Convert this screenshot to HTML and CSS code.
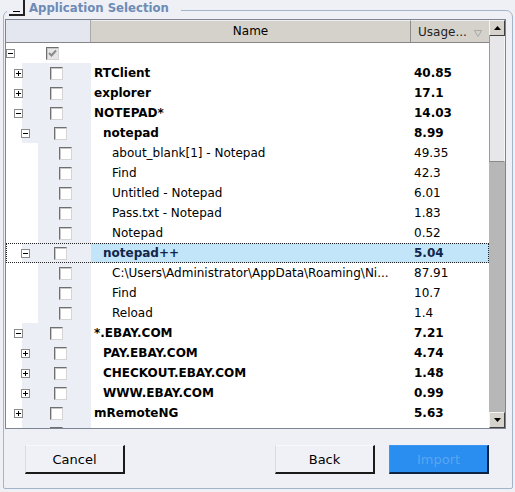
FILE: index.html
```html
<!DOCTYPE html>
<html>
<head>
<meta charset="utf-8">
<link rel="stylesheet" href="styles.css">
</head>
<body>
<div class="frame">
  <div class="legend">
    <span class="collapse"><span class="minus"></span></span>
    <span class="title">Application Selection</span>
  </div>
  <div class="grid">
    <div class="main">
      <div class="header">
        <div class="h-tree"></div>
        <div class="h-name">Name</div>
        <div class="h-usage"><span>Usage...</span>
          <svg class="sort" width="8" height="7" viewBox="0 0 8 7"><path d="M0.5 0.5 H7.5 L4 6.5 Z" fill="none" stroke="#a8a8a8" stroke-width="1"/></svg>
        </div>
      </div>
      <div class="body">
        <div class="row l0">
          <div class="tree"><span class="exp"></span><span class="cb checked"><svg width="11" height="11" viewBox="0 0 11 11"><path d="M2 5 L4.5 7.5 L9 2.5" fill="none" stroke="#8a8a8a" stroke-width="2"/></svg></span></div>
          <div class="name"></div>
          <div class="usage"></div>
        </div>
        <div class="row l1">
          <div class="tree"><span class="exp plus"></span><span class="cb"></span></div>
          <div class="name b">RTClient</div>
          <div class="usage b">40.85</div>
        </div>
        <div class="row l1">
          <div class="tree"><span class="exp plus"></span><span class="cb"></span></div>
          <div class="name b">explorer</div>
          <div class="usage b">17.1</div>
        </div>
        <div class="row l1">
          <div class="tree"><span class="exp"></span><span class="cb"></span></div>
          <div class="name b">NOTEPAD*</div>
          <div class="usage b">14.03</div>
        </div>
        <div class="row l2">
          <div class="tree"><span class="exp"></span><span class="cb"></span></div>
          <div class="name b">notepad</div>
          <div class="usage b">8.99</div>
        </div>
        <div class="row l3">
          <div class="tree"><span class="exp none"></span><span class="cb"></span></div>
          <div class="name">about_blank[1] - Notepad</div>
          <div class="usage">49.35</div>
        </div>
        <div class="row l3">
          <div class="tree"><span class="exp none"></span><span class="cb"></span></div>
          <div class="name">Find</div>
          <div class="usage">42.3</div>
        </div>
        <div class="row l3">
          <div class="tree"><span class="exp none"></span><span class="cb"></span></div>
          <div class="name">Untitled - Notepad</div>
          <div class="usage">6.01</div>
        </div>
        <div class="row l3">
          <div class="tree"><span class="exp none"></span><span class="cb"></span></div>
          <div class="name">Pass.txt - Notepad</div>
          <div class="usage">1.83</div>
        </div>
        <div class="row l3">
          <div class="tree"><span class="exp none"></span><span class="cb"></span></div>
          <div class="name">Notepad</div>
          <div class="usage">0.52</div>
        </div>
        <div class="row l2 sel">
          <div class="tree"><span class="exp"></span><span class="cb"></span></div>
          <div class="name b">notepad++</div>
          <div class="usage b">5.04</div>
        </div>
        <div class="row l3">
          <div class="tree"><span class="exp none"></span><span class="cb"></span></div>
          <div class="name">C:\Users\Administrator\AppData\Roaming\Ni...</div>
          <div class="usage">87.91</div>
        </div>
        <div class="row l3">
          <div class="tree"><span class="exp none"></span><span class="cb"></span></div>
          <div class="name">Find</div>
          <div class="usage">10.7</div>
        </div>
        <div class="row l3">
          <div class="tree"><span class="exp none"></span><span class="cb"></span></div>
          <div class="name">Reload</div>
          <div class="usage">1.4</div>
        </div>
        <div class="row l1">
          <div class="tree"><span class="exp"></span><span class="cb"></span></div>
          <div class="name b">*.EBAY.COM</div>
          <div class="usage b">7.21</div>
        </div>
        <div class="row l2">
          <div class="tree"><span class="exp plus"></span><span class="cb"></span></div>
          <div class="name b">PAY.EBAY.COM</div>
          <div class="usage b">4.74</div>
        </div>
        <div class="row l2">
          <div class="tree"><span class="exp plus"></span><span class="cb"></span></div>
          <div class="name b">CHECKOUT.EBAY.COM</div>
          <div class="usage b">1.48</div>
        </div>
        <div class="row l2">
          <div class="tree"><span class="exp plus"></span><span class="cb"></span></div>
          <div class="name b">WWW.EBAY.COM</div>
          <div class="usage b">0.99</div>
        </div>
        <div class="row l1">
          <div class="tree"><span class="exp plus"></span><span class="cb"></span></div>
          <div class="name b">mRemoteNG</div>
          <div class="usage b">5.63</div>
        </div>
        <div class="row l1">
          <div class="tree"><span class="exp plus"></span><span class="cb"></span></div>
          <div class="name b"></div>
          <div class="usage b"></div>
        </div>
      </div>
    </div>
    <div class="scrollbar">
      <div class="sb-btn"><svg width="7" height="4" viewBox="0 0 7 4"><path d="M0 4 H7 L3.5 0 Z" fill="#000"/></svg></div>
      <div class="sb-thumb"></div>
      <div class="sb-track"></div>
      <div class="sb-btn"><svg width="7" height="4" viewBox="0 0 7 4"><path d="M0 0 H7 L3.5 4 Z" fill="#000"/></svg></div>
    </div>
  </div>
  <div class="buttons">
    <button class="btn">Cancel</button>
    <button class="btn back">Back</button>
    <button class="btn primary">Import</button>
  </div>
</div>
</body>
</html>
```
FILE: styles.css
```css
* { box-sizing: border-box; }
html, body { margin: 0; padding: 0; }
body {
  background: #eef0f5;
  font-family: "DejaVu Sans", Verdana, sans-serif;
  font-size: 12px;
  color: #000;
  width: 515px;
  height: 492px;
  overflow: hidden;
}
.frame {
  position: relative;
  margin: 10px 0 0 3px;
  width: 510px;
  height: 479px;
  border: 1px solid #a3b3c9;
  border-radius: 7px 7px 2px 2px;
  padding: 8px 6px 0 1px;
}
.legend {
  position: absolute;
  top: -11px;
  left: 3px;
  height: 17px;
  display: flex;
  align-items: flex-start;
  background: #eef0f5;
  padding: 0 12px 0 2px;
}
.collapse {
  width: 16px;
  height: 16px;
  border-right: 2px solid #222;
  border-bottom: 2px solid #222;
  display: flex;
  align-items: flex-end;
  justify-content: center;
  padding-bottom: 2px;
}
.minus {
  width: 7px;
  height: 1px;
  background: #000;
}
.title {
  margin-left: 4px;
  color: #6d8bb5;
  font-family: "DejaVu Sans Condensed", "DejaVu Sans", sans-serif;
  font-weight: bold;
  font-size: 13px;
  line-height: 15px;
}
.grid {
  display: flex;
  width: 501px;
  height: 410px;
  border: 1px solid #7d8593;
  background: #fff;
}
.main {
  flex: 1;
  display: flex;
  flex-direction: column;
  overflow: hidden;
  min-width: 0;
}
.header {
  display: flex;
  height: 23px;
  flex: none;
  border-bottom: 1px solid #858585;
}
.h-tree {
  width: 85px;
  background: #e4e7ef;
  border-right: 1px solid #a9a9a9;
}
.h-name {
  width: 319px;
  background: #d5d2cc;
  text-align: center;
  line-height: 21px;
  border-top: 1px solid #eeeeee;
}
.h-usage {
  flex: 1;
  background: #d5d2cc;
  border-left: 1px solid #8c8c8c;
  border-top: 1px solid #eeeeee;
  display: flex;
  align-items: center;
  padding-left: 7px;
  padding-right: 7px;
  justify-content: space-between;
  color: #222;
}
.sort { margin-top: 3px; }
.body {
  flex: 1;
  overflow: hidden;
}
.row {
  display: flex;
  height: 20px;
  align-items: center;
}
.tree {
  width: 85px;
  height: 20px;
  display: flex;
  align-items: center;
  flex: none;
  background: #fff;
}
.l1 .tree, .l2 .tree { background: linear-gradient(to right, #fff 16px, #eceef6 16px); }
.l3 .tree { background: linear-gradient(to right, #fff 32px, #eceef6 32px); }
.exp {
  position: relative;
  width: 9px;
  height: 9px;
  border: 1px solid #8a8a8a;
  background: #fff;
  flex: none;
}
.exp::before {
  content: "";
  position: absolute;
  left: 1px;
  top: 3px;
  width: 5px;
  height: 1px;
  background: #000;
}
.exp.plus::after {
  content: "";
  position: absolute;
  left: 3px;
  top: 1px;
  width: 1px;
  height: 5px;
  background: #000;
}
.exp.none { visibility: hidden; }
.cb {
  width: 13px;
  height: 13px;
  flex: none;
  border-top: 1px solid #6f6f6f;
  border-left: 1px solid #6f6f6f;
  border-right: 1px solid #d4d4d4;
  border-bottom: 1px solid #d4d4d4;
  background: #fff;
  box-shadow: inset 1px 1px 0 #c8c8c8;
  display: flex;
  align-items: center;
  justify-content: center;
}
.cb.checked { background: #e6e6e6; }
.l0 .exp { margin-left: 0; }
.l0 .cb { margin-left: 31px; }
.l1 .exp { margin-left: 8px; }
.l1 .cb { margin-left: 27px; }
.l2 .exp { margin-left: 15px; }
.l2 .cb { margin-left: 24px; }
.l3 .exp { margin-left: 24px; }
.l3 .cb { margin-left: 20px; }
.name {
  width: 319px;
  height: 20px;
  line-height: 20px;
  white-space: nowrap;
  overflow: hidden;
  flex: none;
  padding-left: 3px;
}
.l2 .name { padding-left: 12px; }
.l3 .name { padding-left: 21px; }
.usage {
  flex: 1;
  height: 20px;
  line-height: 20px;
  padding-left: 4px;
  white-space: nowrap;
  overflow: hidden;
}
.b { font-weight: bold; }
.sel { outline: 1px dotted #222; outline-offset: -1px; }
.sel .name, .sel .usage { background: #c3e5f9; color: #12264a; }
.scrollbar {
  width: 16px;
  display: flex;
  flex-direction: column;
  flex: none;
  background: #b7b7b7;
}
.sb-btn {
  height: 16px;
  flex: none;
  background: #d6d3cd;
  border-top: 1px solid #f4f4f4;
  border-left: 1px solid #f4f4f4;
  border-right: 1px solid #404040;
  border-bottom: 1px solid #404040;
  display: flex;
  align-items: center;
  justify-content: center;
}
.sb-thumb {
  height: 126px;
  flex: none;
  background: #e7e7ea;
  border-left: 1px solid #9a9a9a;
  border-right: 1px solid #f6f6f6;
  border-bottom: 1px solid #8a8a8a;
}
.sb-track { flex: 1; }
.buttons {
  display: flex;
  margin-top: 16px;
  padding-left: 20px;
  padding-right: 17px;
}
.btn {
  width: 100px;
  height: 29px;
  font-family: "DejaVu Sans", Verdana, sans-serif;
  font-size: 13px;
  color: #000;
  background: #f0f1f6;
  border-top: 1px solid #f8f8fb;
  border-left: 1px solid #d8dbe3;
  border-right: 2px solid #1a1a1a;
  border-bottom: 2px solid #1a1a1a;
  padding: 0;
}
.back { margin-left: auto; }
.primary {
  margin-left: 14px;
  background: #2a8df0;
  color: #5aa6f0;
  border-top: 1px solid #3a96f0;
  border-left: 1px solid #3a96f0;
  border-right: 2px solid #0e2444;
  border-bottom: 2px solid #0e2444;
}
```
